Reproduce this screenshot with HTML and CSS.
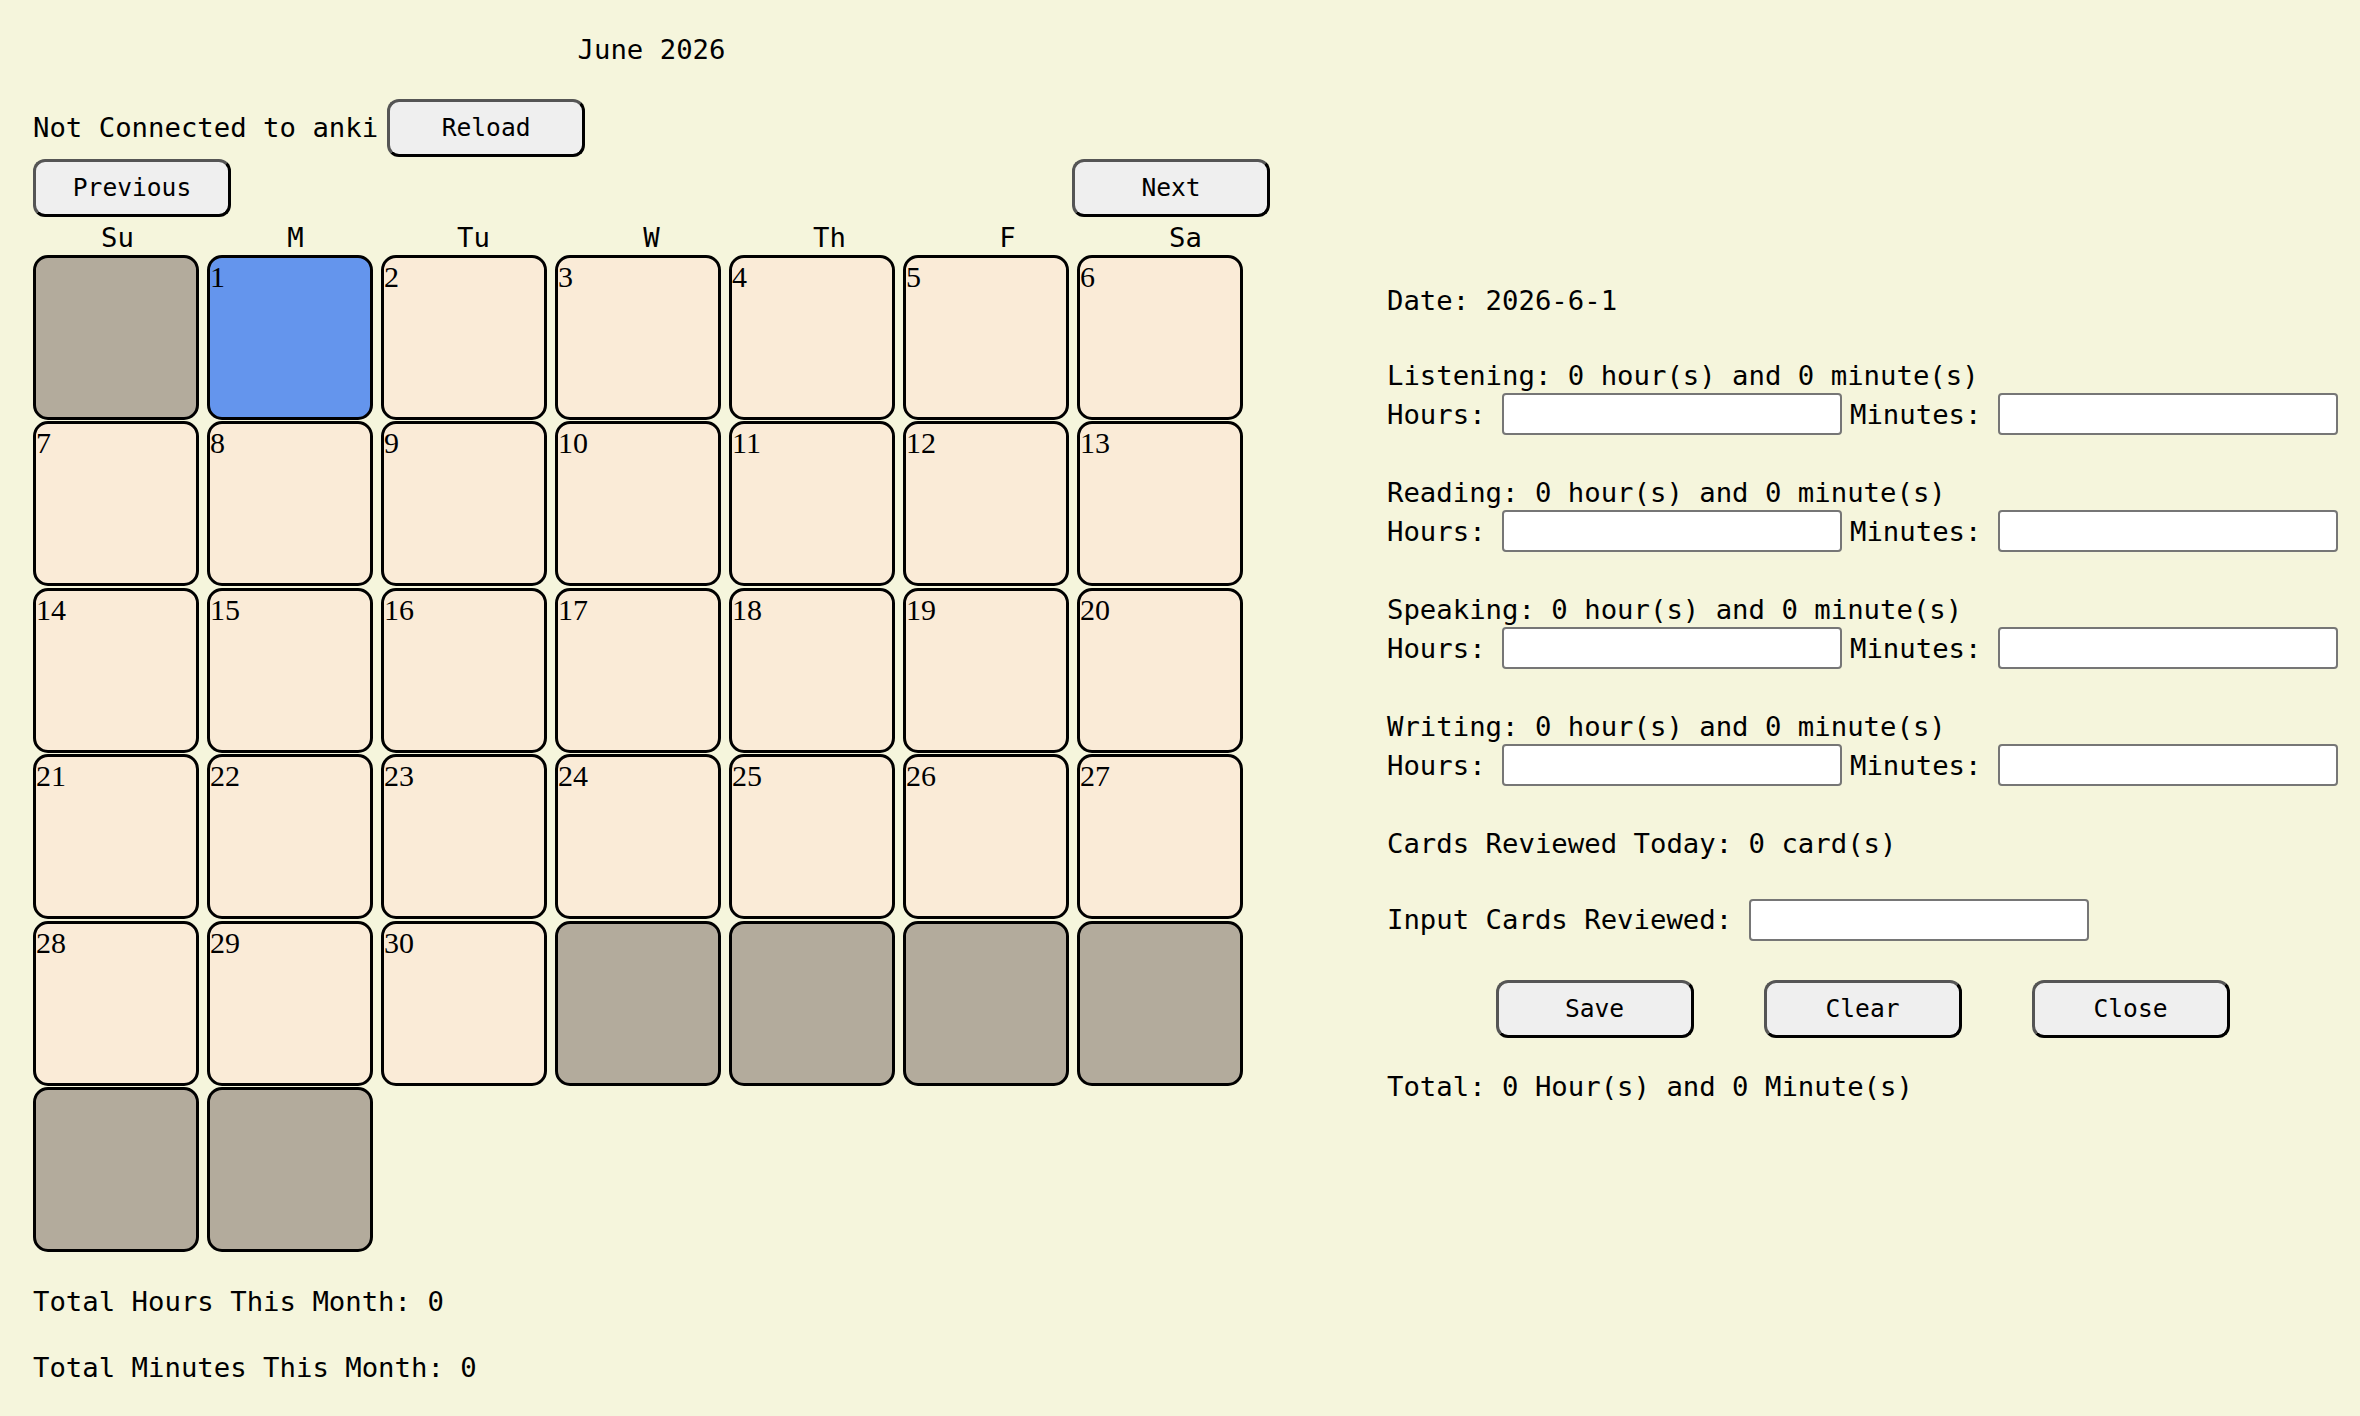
FILE: index.html
```html
<!DOCTYPE html>
<html lang="en">
<head>
    <meta charset="UTF-8">
    <title>Study Calendar</title>
    <link rel="stylesheet" href="styles.css">
</head>
<body>
    <div class="page">
        <div class="left">
            <div class="title">June 2026</div>
            <div class="status">
                <span>Not Connected to anki</span>
                <button class="btn reload">Reload</button>
            </div>
            <div class="nav">
                <button class="btn">Previous</button>
                <button class="btn">Next</button>
            </div>
            <div class="weekdays">
                <span>Su</span><span>M</span><span>Tu</span><span>W</span><span>Th</span><span>F</span><span>Sa</span>
            </div>
            <div class="calendar">
                <div class="day empty"></div>
                <div class="day selected">1</div>
                <div class="day">2</div>
                <div class="day">3</div>
                <div class="day">4</div>
                <div class="day">5</div>
                <div class="day">6</div>
                <div class="day">7</div>
                <div class="day">8</div>
                <div class="day">9</div>
                <div class="day">10</div>
                <div class="day">11</div>
                <div class="day">12</div>
                <div class="day">13</div>
                <div class="day">14</div>
                <div class="day">15</div>
                <div class="day">16</div>
                <div class="day">17</div>
                <div class="day">18</div>
                <div class="day">19</div>
                <div class="day">20</div>
                <div class="day">21</div>
                <div class="day">22</div>
                <div class="day">23</div>
                <div class="day">24</div>
                <div class="day">25</div>
                <div class="day">26</div>
                <div class="day">27</div>
                <div class="day">28</div>
                <div class="day">29</div>
                <div class="day">30</div>
                <div class="day empty"></div>
                <div class="day empty"></div>
                <div class="day empty"></div>
                <div class="day empty"></div>
                <div class="day empty"></div>
                <div class="day empty"></div>
            </div>
            <p class="month-total first">Total Hours This Month: 0</p>
            <p class="month-total">Total Minutes This Month: 0</p>
        </div>

        <div class="right">
            <div>Date: 2026-6-1</div>

            <div class="skill">
                <div>Listening: 0 hour(s) and 0 minute(s)</div>
                <div class="fields">
                    <span class="label">Hours:</span><input type="text" class="hours">
                    <span class="label">Minutes:</span><input type="text">
                </div>
            </div>

            <div class="skill">
                <div>Reading: 0 hour(s) and 0 minute(s)</div>
                <div class="fields">
                    <span class="label">Hours:</span><input type="text" class="hours">
                    <span class="label">Minutes:</span><input type="text">
                </div>
            </div>

            <div class="skill">
                <div>Speaking: 0 hour(s) and 0 minute(s)</div>
                <div class="fields">
                    <span class="label">Hours:</span><input type="text" class="hours">
                    <span class="label">Minutes:</span><input type="text">
                </div>
            </div>

            <div class="skill">
                <div>Writing: 0 hour(s) and 0 minute(s)</div>
                <div class="fields">
                    <span class="label">Hours:</span><input type="text" class="hours">
                    <span class="label">Minutes:</span><input type="text">
                </div>
            </div>

            <div>Cards Reviewed Today: 0 card(s)</div>

            <div class="fields cards">
                <span class="label">Input Cards Reviewed:</span><input type="text">
            </div>

            <div class="actions">
                <button class="btn">Save</button>
                <button class="btn">Clear</button>
                <button class="btn">Close</button>
            </div>

            <div class="total">Total: 0 Hour(s) and 0 Minute(s)</div>
        </div>
    </div>
</body>
</html>
```

FILE: styles.css
```css
body {
    margin: 0;
    background: #f5f5dc;
    color: #000;
    font-family: "DejaVu Sans Mono", monospace;
    font-size: 27.3px;
    line-height: 35px;
}
.page {
    display: flex;
    gap: 117px;
    padding: 32px 0 0 33px;
}
.left {
    width: 1237px;
}
.title {
    text-align: center;
    margin-bottom: 31.5px;
}
.status {
    display: flex;
    align-items: center;
}
.reload {
    margin-left: 9px;
}
.nav {
    display: flex;
    justify-content: space-between;
    margin-top: 2px;
}
.btn {
    width: 198px;
    height: 58px;
    padding: 0;
    font-family: inherit;
    font-size: 24.6px;
    color: #000;
    background: #efefef;
    border: 3px solid;
    border-color: #555 #000 #000 #555;
    border-radius: 12px;
}
.weekdays {
    display: grid;
    grid-template-columns: repeat(7, 178px);
    margin: 3.5px 0 0 -4.5px;
    text-align: center;
}
.calendar {
    display: grid;
    grid-template-columns: repeat(7, 166px);
    column-gap: 8px;
    row-gap: 1.4px;
}
.day {
    box-sizing: border-box;
    height: 165px;
    padding-top: 2px;
    border: 3px solid #000;
    border-radius: 15px;
    background: #faebd7;
    font-family: "Liberation Serif", serif;
    font-size: 30px;
    line-height: 1.15;
}
.day.empty {
    background: #b3ab9c;
}
.day.selected {
    background: #6495ed;
}
.month-total {
    margin: 31.5px 0 0;
}
.month-total.first {
    margin-top: 32px;
}
.right {
    width: 951px;
    margin-top: 251px;
    display: flex;
    flex-direction: column;
    gap: 40px;
}
.fields {
    display: flex;
    align-items: center;
    height: 42px;
}
.label {
    margin-right: 16.4px;
}
input {
    box-sizing: border-box;
    width: 340px;
    height: 42px;
    padding: 0 4px;
    font-family: inherit;
    font-size: 24px;
    background: #fff;
    border: 2px solid #767676;
    border-radius: 4px;
}
input.hours {
    margin-right: 8px;
}
.cards {
    margin-top: -2.5px;
}
.actions {
    display: flex;
    justify-content: center;
    gap: 70px;
    margin-top: -1px;
}
.total {
    margin-top: -8.5px;
}
```
